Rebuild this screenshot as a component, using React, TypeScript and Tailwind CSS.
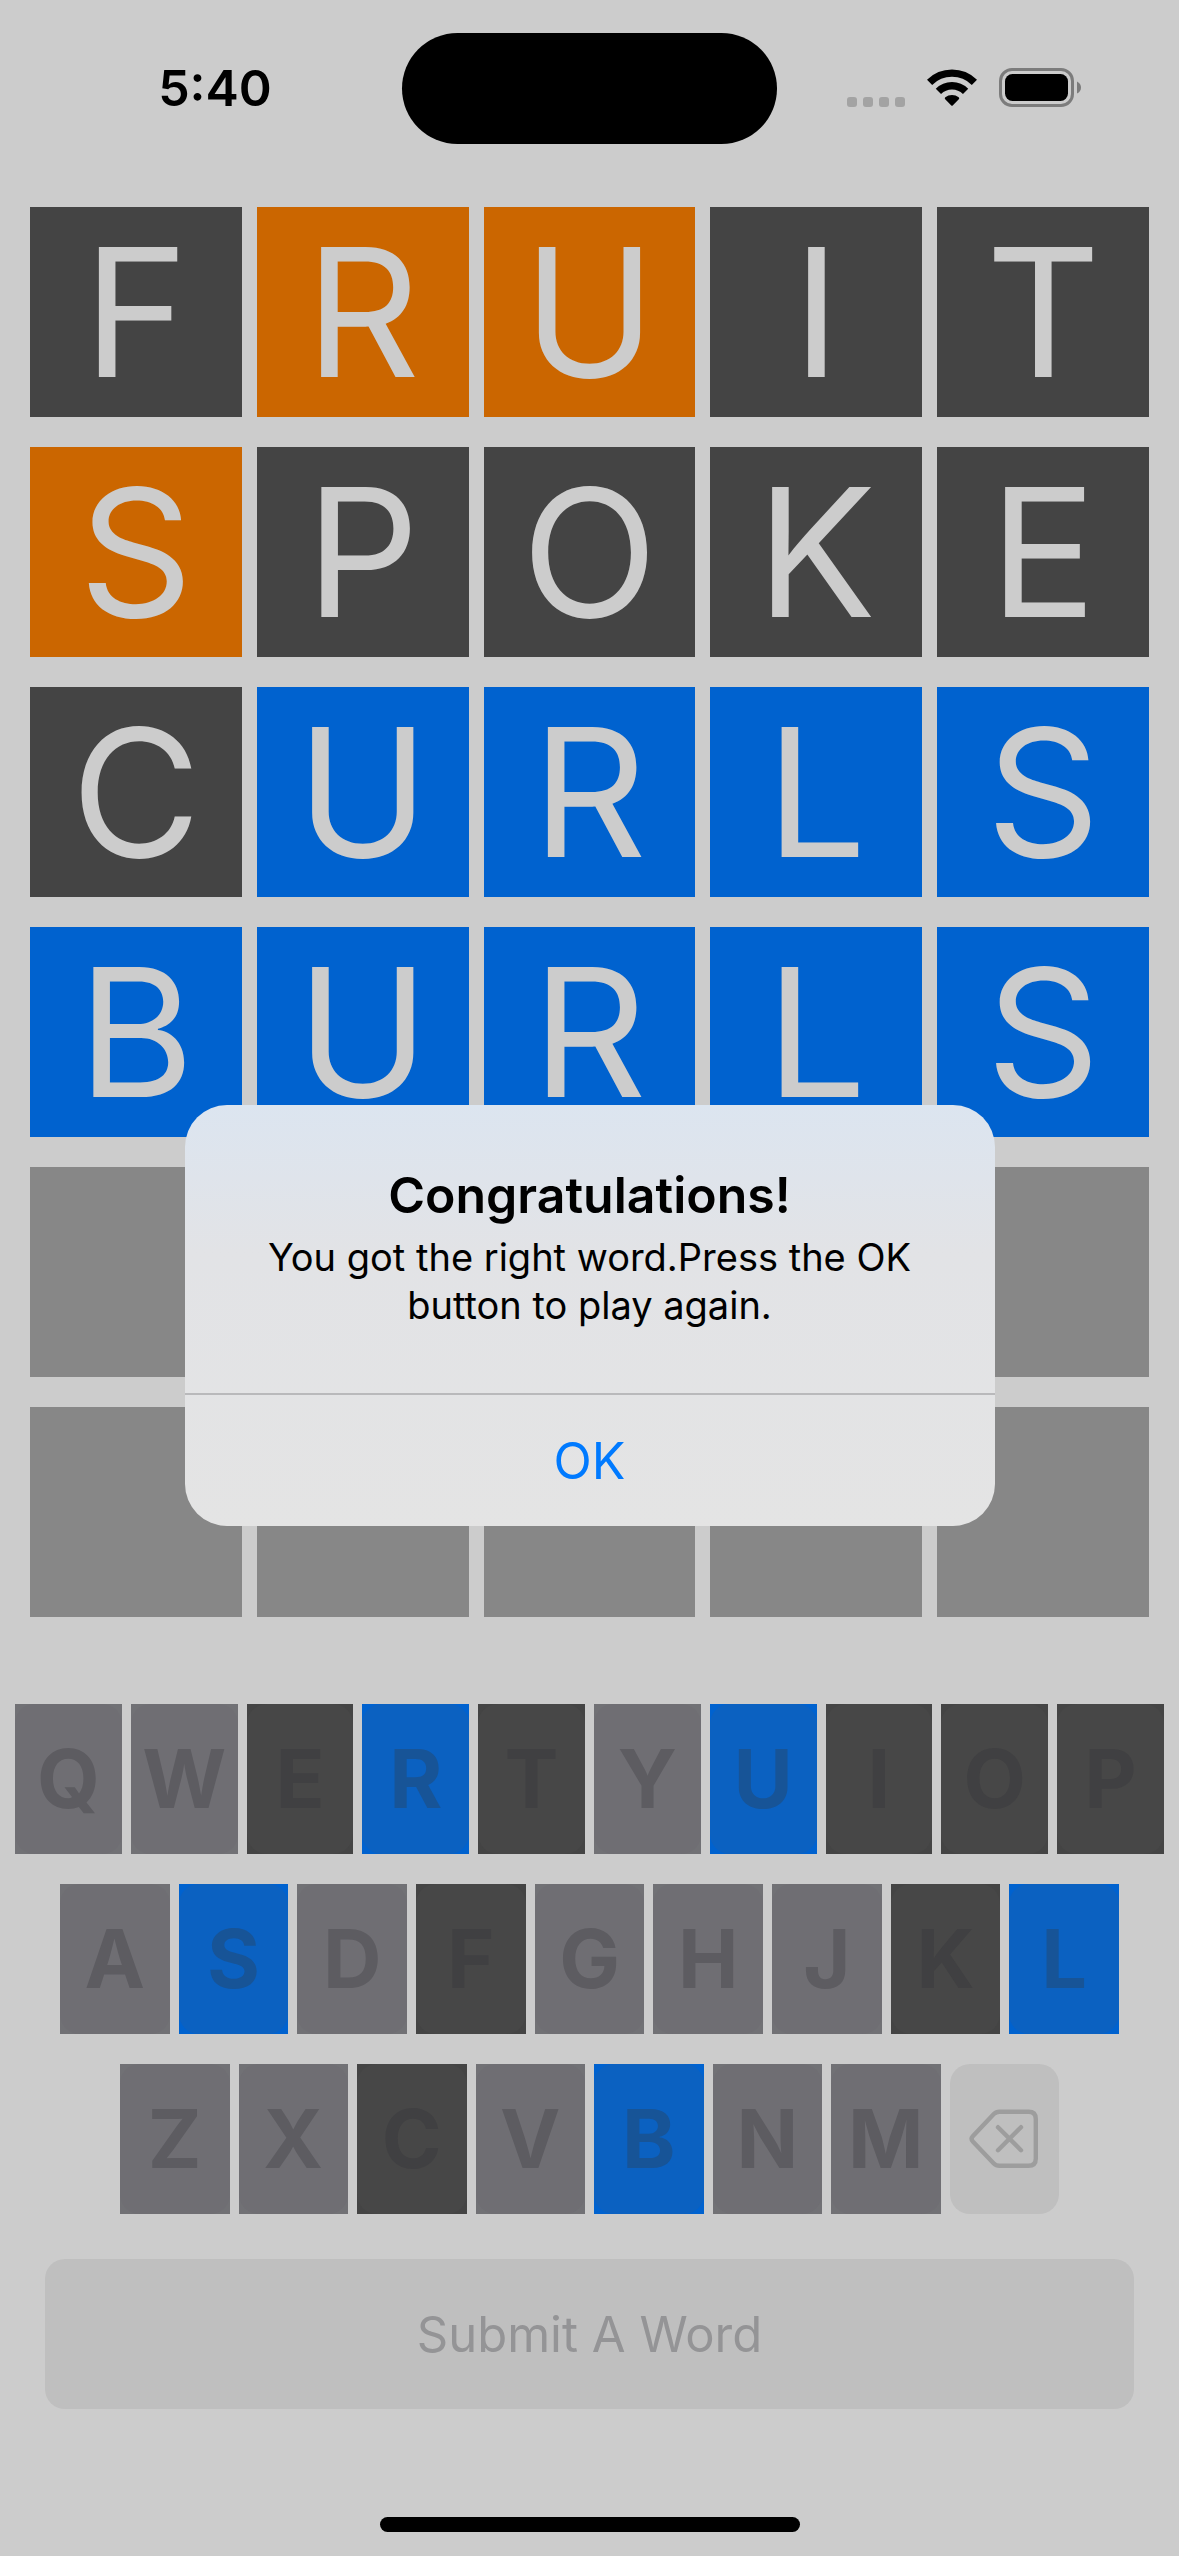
type Mark = "absent" | "present" | "correct" | "empty";
type KeyState = "unused" | "absent" | "correct";

const TILE_STYLE: Record<Mark, string> = {
  absent: "bg-[#444444]",
  present: "bg-[#cb6600]",
  correct: "bg-[#0062cf]",
  empty: "bg-[#878787]",
};

const KEY_STYLE: Record<KeyState, { base: string; face: string }> = {
  unused: { base: "bg-[#717175]", face: "bg-[#6f6e73] text-[#5d5c61]" },
  absent: { base: "bg-[#444444]", face: "bg-[#474747] text-[#404042]" },
  correct: { base: "bg-[#0062cf]", face: "bg-[#0b61c1] text-[#175497]" },
};

const GUESSES: { word: string; marks: Mark[] }[] = [
  { word: "FRUIT", marks: ["absent", "present", "present", "absent", "absent"] },
  { word: "SPOKE", marks: ["present", "absent", "absent", "absent", "absent"] },
  { word: "CURLS", marks: ["absent", "correct", "correct", "correct", "correct"] },
  { word: "BURLS", marks: ["correct", "correct", "correct", "correct", "correct"] },
  { word: "     ", marks: ["empty", "empty", "empty", "empty", "empty"] },
  { word: "     ", marks: ["empty", "empty", "empty", "empty", "empty"] },
];

const CORRECT_KEYS = "BURLS";
const ABSENT_KEYS = "FITPOKEC";

function keyState(letter: string): KeyState {
  if (CORRECT_KEYS.includes(letter)) return "correct";
  if (ABSENT_KEYS.includes(letter)) return "absent";
  return "unused";
}

function WifiIcon() {
  return (
    <svg width="50" height="37" viewBox="0 0 50 37" aria-hidden="true">
      <g fill="none" stroke="#000" strokeWidth="7.4">
        <path d="M2.6 13.3 A32 32 0 0 1 47.4 13.3" />
        <path d="M11.4 22.4 A19.2 19.2 0 0 1 38.6 22.4" />
      </g>
      <path
        d="M18.2 30.2 Q17.2 29.2 18.3 28.3 A10.5 10.5 0 0 1 31.7 28.3 Q32.8 29.2 31.8 30.2 L25.7 36.4 Q25 37 24.3 36.4 Z"
        fill="#000"
      />
    </svg>
  );
}

function BatteryIcon() {
  return (
    <svg width="82" height="39" viewBox="0 0 82 39" aria-hidden="true">
      <rect x="1.5" y="1.5" width="72" height="36" rx="11.5" fill="none" stroke="#7c7c7c" strokeWidth="3" />
      <rect x="6" y="6" width="63" height="27" rx="7.5" fill="#000" />
      <path d="M78 13.5 Q82 15.5 82 19.5 Q82 23.5 78 25.5 Z" fill="#7c7c7c" />
    </svg>
  );
}

function BackspaceIcon() {
  return (
    <svg width="70" height="60" viewBox="0 0 70 60" fill="none" stroke="#9d9d9d" strokeWidth="4.4" strokeLinecap="round" strokeLinejoin="round" aria-hidden="true">
      <path d="M30.5 2.8 H59.5 Q66.8 2.8 66.8 10 V49.5 Q66.8 56.8 59.5 56.8 H30.5 Q27 56.8 24.8 54.5 L3.8 32.4 Q1.4 29.8 3.8 27.2 L24.8 5.1 Q27 2.8 30.5 2.8 Z" />
      <path d="M29 18.2 L52 41.2 M52 18.2 L29 41.2" />
    </svg>
  );
}

function StatusBar() {
  return (
    <header className="grid grid-cols-[1fr_375px_1fr] items-center pt-[33px]">
      <time className="pb-0.5 pl-7 text-center text-[50px] leading-none font-semibold text-black">5:40</time>
      <div className="h-[111px] rounded-full bg-black" />
      <div className="flex items-center justify-end gap-[22px] pr-[98px] pb-0.5">
        <div className="flex gap-1.5 pt-7">
          {[0, 1, 2, 3].map((dot) => (
            <span key={dot} className="size-2.5 rounded-[3px] bg-[#a3a3a3]" />
          ))}
        </div>
        <WifiIcon />
        <BatteryIcon />
      </div>
    </header>
  );
}

function Board() {
  return (
    <section aria-label="Guesses" className="mt-[63px] flex flex-col gap-[30px] px-[30px]">
      {GUESSES.map((guess, row) => (
        <div key={row} className="grid grid-cols-5 gap-[15px]">
          {guess.marks.map((mark, col) => (
            <div
              key={col}
              className={`flex h-[210px] items-center justify-center pt-0.5 text-[178px] leading-none text-[#cccccc] ${TILE_STYLE[mark]}`}
            >
              {guess.word[col].trim()}
            </div>
          ))}
        </div>
      ))}
    </section>
  );
}

function Key({ letter }: { letter: string }) {
  const style = KEY_STYLE[keyState(letter)];
  return (
    <button type="button" disabled className={`h-[150px] min-w-0 flex-1 ${style.base}`}>
      <span className={`flex h-full items-center justify-center rounded-[20px] text-[81px] leading-none font-bold ${style.face}`}>
        {letter}
      </span>
    </button>
  );
}

function Keyboard() {
  return (
    <section aria-label="Keyboard" className="mt-[87px] flex flex-col gap-[30px]">
      <div className="flex gap-[9px] px-[15px]">
        {[..."QWERTYUIOP"].map((letter) => (
          <Key key={letter} letter={letter} />
        ))}
      </div>
      <div className="flex gap-[9px] px-[60px]">
        {[..."ASDFGHJKL"].map((letter) => (
          <Key key={letter} letter={letter} />
        ))}
      </div>
      <div className="flex gap-[9px] px-[120px]">
        {[..."ZXCVBNM"].map((letter) => (
          <Key key={letter} letter={letter} />
        ))}
        <button
          type="button"
          disabled
          aria-label="Delete"
          className="flex h-[150px] min-w-0 flex-1 items-center justify-center rounded-[20px] bg-[#bfbfbf]"
        >
          <BackspaceIcon />
        </button>
      </div>
    </section>
  );
}

function WinAlert() {
  return (
    <div className="absolute inset-0 flex items-center justify-center pt-[75px]">
      <div
        role="alertdialog"
        aria-labelledby="alert-title"
        aria-describedby="alert-message"
        className="w-[810px] overflow-hidden rounded-[42px] bg-linear-to-b from-[#dce5f0] via-[#e2e3e6] via-35% to-[#e4e4e4] text-center"
      >
        <div className="px-12 pt-[60px] pb-16">
          <h1 id="alert-title" className="text-[50px] leading-[60px] font-semibold text-black">
            Congratulations!
          </h1>
          <p id="alert-message" className="mt-2 text-[38px] leading-[48px] text-black">
            You got the right word.Press the OK button to play again.
          </p>
        </div>
        <button type="button" className="block h-[133px] w-full border-t-2 border-[#b9b9bb] text-[50px] leading-none text-[#007aff]">
          OK
        </button>
      </div>
    </div>
  );
}

export default function App() {
  return (
    <main className="relative flex min-h-screen flex-col bg-[#cccccc] font-['Inter',sans-serif]">
      <StatusBar />
      <Board />
      <Keyboard />
      <div className="mt-[45px] px-[45px]">
        <button type="button" disabled className="h-[150px] w-full rounded-[20px] bg-[#bfbfbf] text-[49px] leading-none text-[#949496]">
          Submit A Word
        </button>
      </div>
      <div className="mx-auto mt-auto mb-6 h-[15px] w-[420px] rounded-full bg-black" />
      <WinAlert />
    </main>
  );
}
